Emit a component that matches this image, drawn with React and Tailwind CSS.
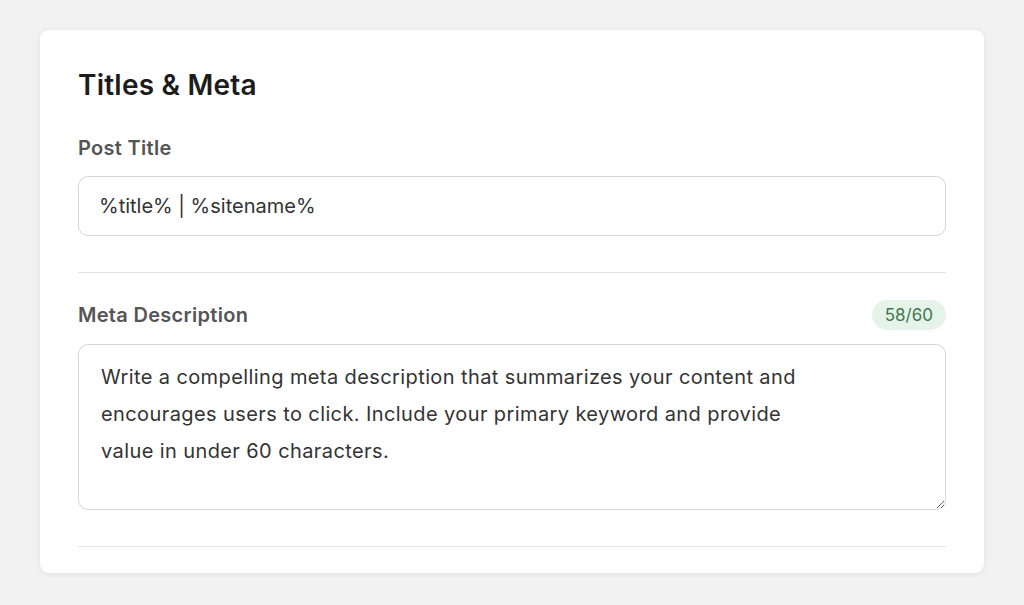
export default function App() {
  const description =
    'Write a compelling meta description that summarizes your content and\nencourages users to click. Include your primary keyword and provide\nvalue in under 60 characters.';

  return (
    <div
      className="min-h-screen w-full bg-[#f2f2f2] pt-[30px] pb-[32px] px-[40px]"
      style={{ fontFamily: 'Inter, "Noto Sans", sans-serif' }}
    >
      <div className="bg-white rounded-[9px] shadow-[0_1px_6px_rgba(0,0,0,0.08)] px-[38px] pt-[38px] pb-[26px]">
        <h2 className="text-[28px] leading-[34px] font-semibold text-[#1c1c1c] tracking-[0.2px]">
          Titles &amp; Meta
        </h2>

        {/* Post Title */}
        <label className="block mt-[34px] text-[20px] leading-[24px] font-semibold text-[#555555] tracking-[0.3px]">
          Post Title
        </label>
        <input
          type="text"
          defaultValue="%title% | %sitename%"
          className="mt-[16px] block w-full h-[60px] rounded-[10px] border border-[#d6d6d6] px-[20px] text-[20px] text-[#333333] outline-none"
        />

        <div className="mt-[36px] h-px bg-[#e2e2e2]" />

        {/* Meta Description */}
        <div className="mt-[27px] flex items-center justify-between">
          <label className="text-[20px] leading-[24px] font-semibold text-[#555555] tracking-[0.3px]">
            Meta Description
          </label>
          <span className="h-[30px] px-[13px] rounded-full bg-[#e5f3e8] text-[#3f7650] text-[17px] leading-[30px]">
            58/60
          </span>
        </div>
        <textarea
          defaultValue={description}
          className="mt-[14px] block w-full h-[166px] rounded-[10px] border border-[#d6d6d6] px-[22px] pt-[14px] text-[20px] leading-[37px] tracking-[0.4px] text-[#333333] outline-none resize-y"
        />

        <div className="mt-[36px] h-px bg-[#e2e2e2]" />
      </div>
    </div>
  );
}
